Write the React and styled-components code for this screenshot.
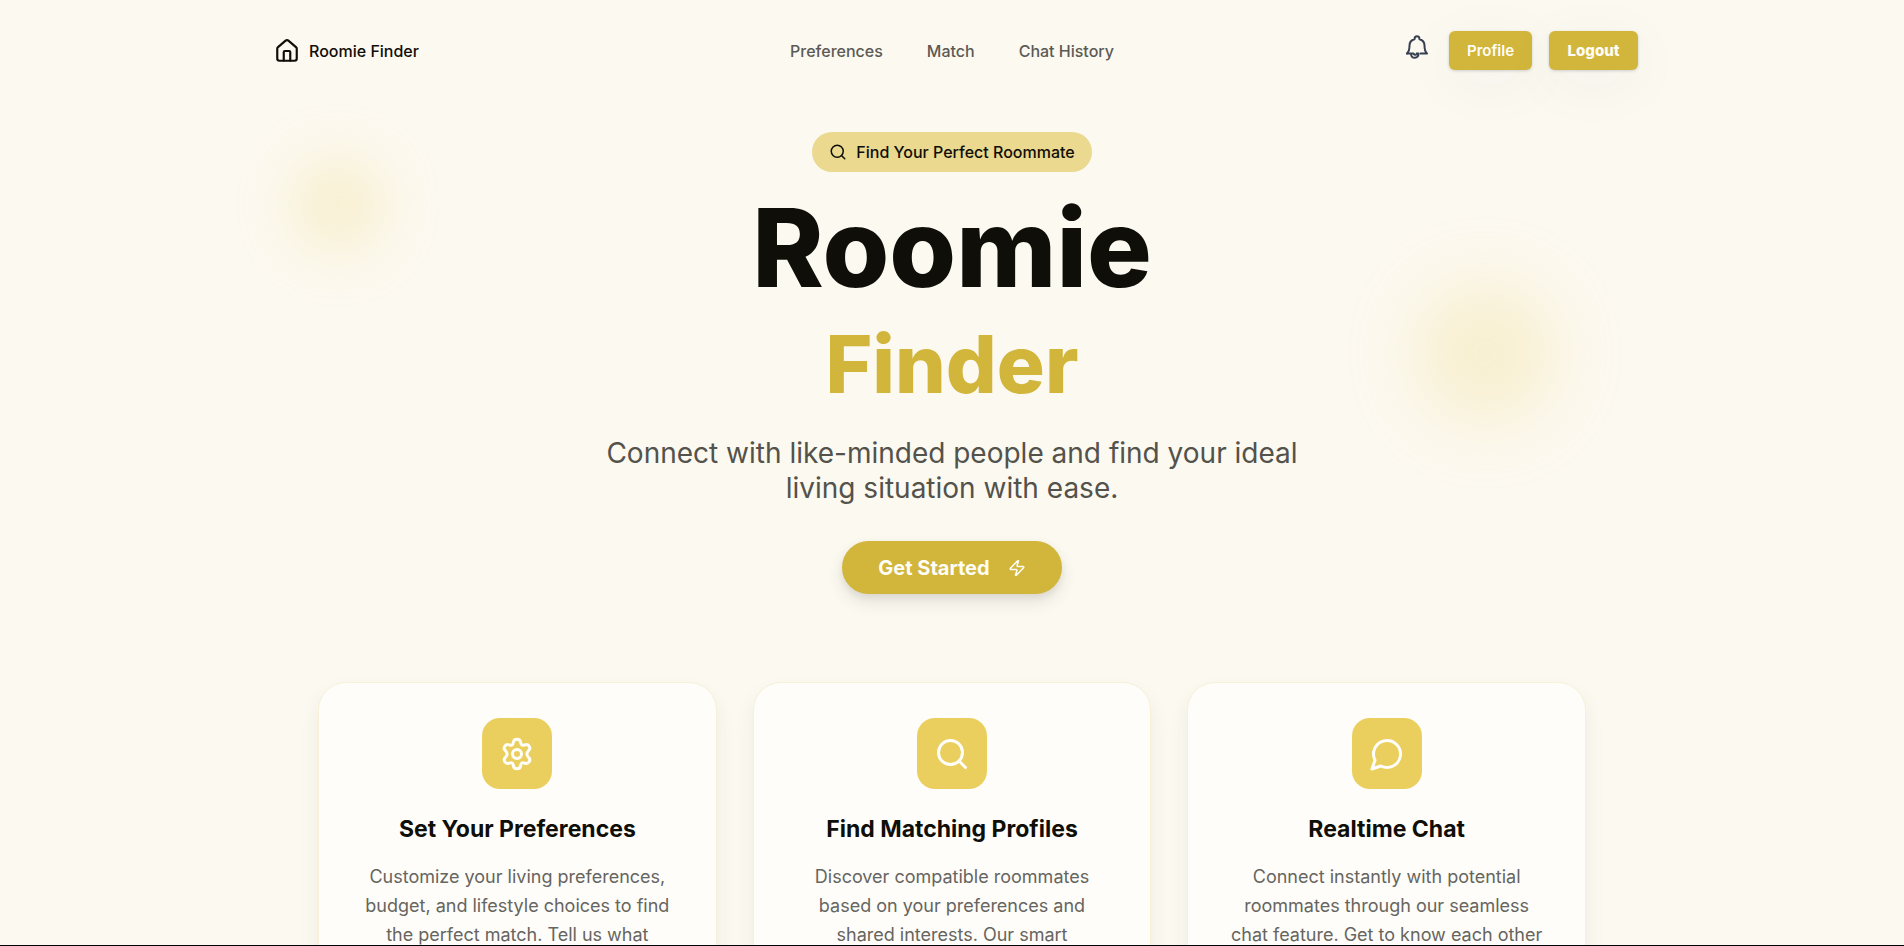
import React from "react";
import styled, { createGlobalStyle } from "styled-components";
import { House, Search, Zap } from "lucide-react";

const GlobalStyle = createGlobalStyle`
  *, *::before, *::after { box-sizing: border-box; }
  body {
    margin: 0;
    background: #fcf9f1;
    color: #0f0e08;
    font-family: Inter, "Liberation Sans", sans-serif;
    overflow-x: hidden;
    scrollbar-width: none;
  }
  h1, h2, p { margin: 0; }
  a { color: inherit; text-decoration: none; }
  button { font: inherit; border: 0; cursor: pointer; }
`;

const Page = styled.div`
  position: relative;
  overflow: hidden;
  padding-bottom: 40px;
`;

const Header = styled.header`
  display: grid;
  grid-template-columns: 1fr auto 1fr;
  align-items: center;
  max-width: 1372px;
  height: 101px;
  margin: 0 auto;
`;

const Logo = styled.a`
  display: flex;
  align-items: center;
  justify-self: start;
  gap: 9px;
  padding-left: 8px;
  font-size: 16px;
  font-weight: 500;
`;

const Nav = styled.nav`
  display: flex;
  gap: 44px;
  color: #5b5a55;
  font-size: 16px;
  font-weight: 500;
`;

const Actions = styled.div`
  display: flex;
  align-items: center;
  justify-self: end;
  gap: 17px;
`;

const BellButton = styled.button`
  display: flex;
  padding: 0 3px 8px 0;
  background: none;
  color: #374151;
`;

const ActionButton = styled.button`
  width: ${(p) => (p.$strong ? 89 : 83)}px;
  height: 39px;
  padding: 0;
  border-radius: 6px;
  background: #d1b63b;
  color: #fffdf7;
  font-size: 15px;
  font-weight: ${(p) => (p.$strong ? 800 : 600)};
  box-shadow: 0 1px 3px rgba(40, 50, 60, 0.2), 0 12px 60px rgba(40, 50, 60, 0.05);
`;

const Hero = styled.main`
  position: relative;
  display: flex;
  flex-direction: column;
  align-items: center;
  max-width: 1268px;
  margin: 0 auto;
  padding-top: 31px;
  text-align: center;
`;

const Glow = styled.div`
  position: absolute;
  z-index: -1;
  border-radius: 50%;
  background: #eacf5e;
  width: ${(p) => p.$size}px;
  height: ${(p) => p.$size}px;
  filter: blur(${(p) => p.$blur}px);
  opacity: 0.23;
`;

const LeftGlow = styled(Glow)`
  top: 55px;
  left: -29px;
`;

const RightGlow = styled(Glow)`
  top: 180px;
  right: 29px;
`;

const Badge = styled.div`
  display: flex;
  align-items: center;
  gap: 9px;
  height: 40px;
  padding: 0 17px;
  border-radius: 20px;
  background: #ead98e;
  font-size: 16px;
  font-weight: 500;
`;

const Title = styled.h1`
  display: flex;
  flex-direction: column;
  margin-top: 20px;
  font-weight: 800;
`;

const TitleMain = styled.span`
  font-size: 108px;
  line-height: 112px;
`;

const TitleAccent = styled.span`
  color: #d1b63b;
  font-size: 80px;
  line-height: 120px;
`;

const Lead = styled.p`
  margin-top: 12px;
  color: #53524b;
  font-size: 28px;
  line-height: 35px;
`;

const StartButton = styled.button`
  display: flex;
  align-items: center;
  justify-content: center;
  gap: 18px;
  width: 220px;
  height: 53px;
  margin-top: 35px;
  border-radius: 27px;
  background: #d1b63b;
  color: #fffdf7;
  font-size: 20px;
  font-weight: 700;
  box-shadow: 0 8px 16px rgba(60, 60, 50, 0.12), 0 3px 6px rgba(60, 60, 50, 0.08);
`;

const Cards = styled.section`
  display: grid;
  grid-template-columns: repeat(3, 1fr);
  gap: 36px;
  width: 100%;
  margin-top: 88px;
`;

const Card = styled.article`
  display: flex;
  flex-direction: column;
  align-items: center;
  padding: 35px 20px 36px;
  border: 1px solid #f7f1d8;
  border-radius: 28px;
  background: #fefdf9;
  box-shadow: 0 10px 20px rgba(60, 55, 30, 0.07);
`;

const CardIcon = styled.div`
  display: grid;
  place-items: center;
  width: 70px;
  height: 71px;
  border-radius: 18px;
  background: #eacf5e;
  color: #fffefa;
`;

const CardTitle = styled.h2`
  margin-top: 24px;
  font-size: 23px;
  font-weight: 700;
  line-height: 32px;
`;

const CardText = styled.p`
  margin-top: 17px;
  color: #66655f;
  font-size: 18px;
  line-height: 29px;
`;

const BottomEdge = styled.div`
  position: fixed;
  right: 0;
  bottom: 0;
  left: 0;
  height: 1px;
  background: #000;
`;

function BellIcon() {
  return (
    <svg width="24" height="26" viewBox="0 0 24 26" fill="none" stroke="currentColor" strokeWidth="2" strokeLinecap="round" strokeLinejoin="round" aria-hidden="true">
      <path d="M2 19.500C4.200 17.500 4.500 15.500 4.500 11.500C4.500 8 6.500 6 9.500 5.200C9.500 1.400 14.500 1.400 14.500 5.200C17.500 6 19.500 8 19.500 11.500C19.500 15.500 19.800 17.500 22 19.500H15.500" />
      <path d="M2 19.500H8.500C9.500 21.500 12 21 12 19.200M6 20C6 25.200 13.500 25 13.500 19.500" />
    </svg>
  );
}

function GearIcon() {
  return (
    <svg width="36" height="36" viewBox="0 0 36 36" fill="none" stroke="currentColor" strokeWidth="3" strokeLinejoin="round" aria-hidden="true">
      <path d="M14.400 6.200C14.900 2.200 21.100 2.200 21.600 6.200C21.800 8.900 23.600 9.900 25.800 8.900C29.400 7.300 32.700 12.200 29.400 14.800C27.400 16.500 27.400 19.500 29.400 21.200C32.700 23.800 29.400 28.700 25.800 27.100C23.600 26.100 21.800 27.100 21.600 29.800C21.100 33.800 14.900 33.800 14.400 29.800C14.200 27.100 12.400 26.100 10.200 27.100C6.600 28.700 3.300 23.800 6.600 21.200C8.600 19.500 8.600 16.500 6.600 14.800C3.300 12.200 6.600 7.300 10.200 8.900C12.400 9.900 14.200 8.900 14.400 6.200Z" />
      <circle cx="18" cy="18" r="4.500" />
    </svg>
  );
}

function ChatIcon() {
  return (
    <svg width="36" height="36" viewBox="0 0 24 24" fill="none" stroke="currentColor" strokeWidth="2" strokeLinecap="round" strokeLinejoin="round" aria-hidden="true">
      <path d="M7.900 20A9 9 0 1 0 4 16.100L2 22Z" />
    </svg>
  );
}

const features = [
  {
    icon: <GearIcon />,
    title: "Set Your Preferences",
    lines: ["Customize your living preferences,", "budget, and lifestyle choices to find", "the perfect match. Tell us what"],
  },
  {
    icon: <Search size={36} />,
    title: "Find Matching Profiles",
    lines: ["Discover compatible roommates", "based on your preferences and", "shared interests. Our smart"],
  },
  {
    icon: <ChatIcon />,
    title: "Realtime Chat",
    lines: ["Connect instantly with potential", "roommates through our seamless", "chat feature. Get to know each other"],
  },
];

function Lines({ items }) {
  return items.map((line, i) => (
    <React.Fragment key={line}>
      {i > 0 && <br />}
      {line}
    </React.Fragment>
  ));
}

export default function App() {
  return (
    <Page>
      <GlobalStyle />
      <Header>
        <Logo href="#">
          <House size={26} />
          Roomie Finder
        </Logo>
        <Nav>
          <a href="#preferences">Preferences</a>
          <a href="#match">Match</a>
          <a href="#history">Chat History</a>
        </Nav>
        <Actions>
          <BellButton aria-label="Notifications">
            <BellIcon />
          </BellButton>
          <ActionButton>Profile</ActionButton>
          <ActionButton $strong>Logout</ActionButton>
        </Actions>
      </Header>
      <Hero>
        <LeftGlow $size={98} $blur={30} />
        <RightGlow $size={144} $blur={36} />
        <Badge>
          <Search size={18} />
          Find Your Perfect Roommate
        </Badge>
        <Title>
          <TitleMain>Roomie</TitleMain>
          <TitleAccent>Finder</TitleAccent>
        </Title>
        <Lead>
          <Lines items={["Connect with like-minded people and find your ideal", "living situation with ease."]} />
        </Lead>
        <StartButton>
          Get Started
          <Zap size={18} />
        </StartButton>
        <Cards>
          {features.map((f) => (
            <Card key={f.title}>
              <CardIcon>{f.icon}</CardIcon>
              <CardTitle>{f.title}</CardTitle>
              <CardText>
                <Lines items={f.lines} />
              </CardText>
            </Card>
          ))}
        </Cards>
      </Hero>
      <BottomEdge />
    </Page>
  );
}
